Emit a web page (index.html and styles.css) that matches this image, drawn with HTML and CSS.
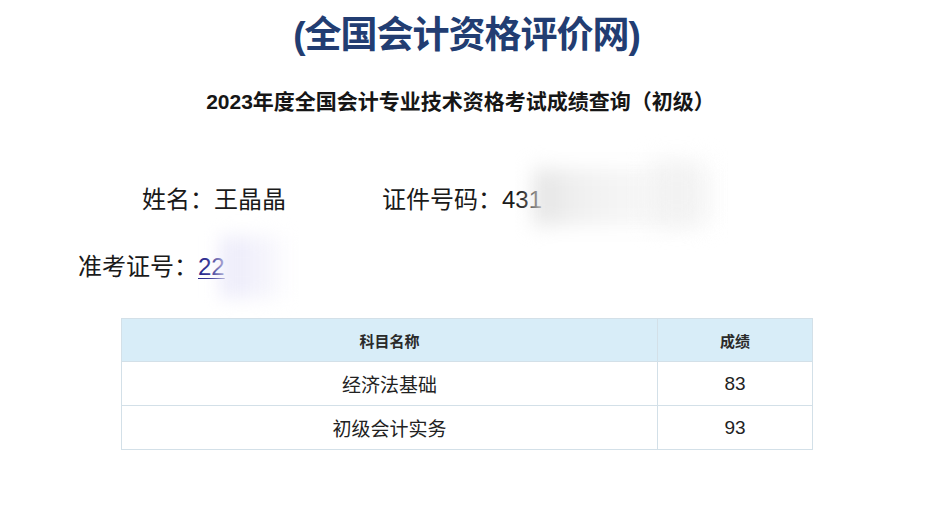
FILE: index.html
```html
<!DOCTYPE html>
<html lang="zh-CN">
<head>
<meta charset="utf-8">
<title>成绩查询</title>
<link rel="stylesheet" href="styles.css">
</head>
<body>
<div class="page">
  <h1 class="site-title">(全国会计资格评价网)</h1>
  <h2 class="query-title">2023年度全国会计专业技术资格考试成绩查询（初级）</h2>

  <div class="info-row row-one">
    <span class="field name-field">姓名：王晶晶</span>
    <span class="field id-field">证件号码：431<span class="smudge smudge-id"></span><span class="smudge smudge-id2"></span></span>
  </div>
  <div class="info-row row-two">
    <span class="field">准考证号：<a class="exam-link">22</a><span class="smudge smudge-exam"></span></span>
  </div>

  <table class="score-table">
    <thead>
      <tr><th class="col-subject">科目名称</th><th class="col-score">成绩</th></tr>
    </thead>
    <tbody>
      <tr><td>经济法基础</td><td>83</td></tr>
      <tr><td>初级会计实务</td><td>93</td></tr>
    </tbody>
  </table>
</div>
</body>
</html>
```
FILE: styles.css
```css
html, body {
  margin: 0;
  padding: 0;
  background: #ffffff;
}
body {
  font-family: "Liberation Sans", "Noto Sans CJK SC", sans-serif;
  color: #151515;
  overflow: hidden;
}
.page {
  width: 933px;
  height: 523px;
  display: flex;
  flex-direction: column;
}
.site-title {
  margin: 12px 0 0;
  font-size: 37px;
  line-height: 48px;
  font-weight: 700;
  letter-spacing: -1px;
  color: #223d72;
  text-align: center;
}
.query-title {
  margin: 27px 0 0;
  font-size: 21px;
  line-height: 30px;
  font-weight: 700;
  color: #161616;
  text-align: center;
  padding-right: 12px;
}
.info-row {
  display: flex;
  font-size: 24px;
  line-height: 34px;
  color: #1a1a1a;
}
.row-one {
  margin-top: 66px;
  padding-left: 142px;
  gap: 96px;
}
.row-two {
  margin-top: 33px;
  padding-left: 78px;
}
.field {
  position: relative;
  white-space: nowrap;
}
.exam-link {
  color: #2a2a8e;
  text-decoration: underline;
  text-underline-offset: 3px;
  text-decoration-thickness: 1px;
}
.smudge {
  position: absolute;
  pointer-events: none;
}
.smudge-id {
  left: 152px;
  top: -14px;
  width: 190px;
  height: 56px;
  background: linear-gradient(90deg, #e2e2e2 0%, #efefef 20%, #f6f6f6 50%, #f8f8f8 80%, rgba(255,255,255,0) 100%);
  filter: blur(10px);
}
.smudge-id2 {
  left: 270px;
  top: -20px;
  width: 50px;
  height: 60px;
  background: #f2f2f2;
  filter: blur(12px);
}
.smudge-exam {
  left: 142px;
  top: -14px;
  width: 72px;
  height: 62px;
  background: linear-gradient(90deg, #ecebfa 0%, #f2f1fb 50%, rgba(255,255,255,0) 100%);
  filter: blur(9px);
}
.score-table {
  margin: 34px 0 0 121px;
  width: 692px;
  border-collapse: collapse;
  border: 1px solid #d3e0e8;
  text-align: center;
}
.score-table th,
.score-table td {
  border: 1px solid #d3e0e8;
  padding: 0;
}
.score-table th {
  background: #d8edf8;
  height: 42px;
  font-size: 15px;
  font-weight: 700;
  color: #2a2a2a;
}
.score-table td {
  height: 43px;
  font-size: 19px;
  color: #222;
}
.col-subject {
  width: 535px;
}
```
